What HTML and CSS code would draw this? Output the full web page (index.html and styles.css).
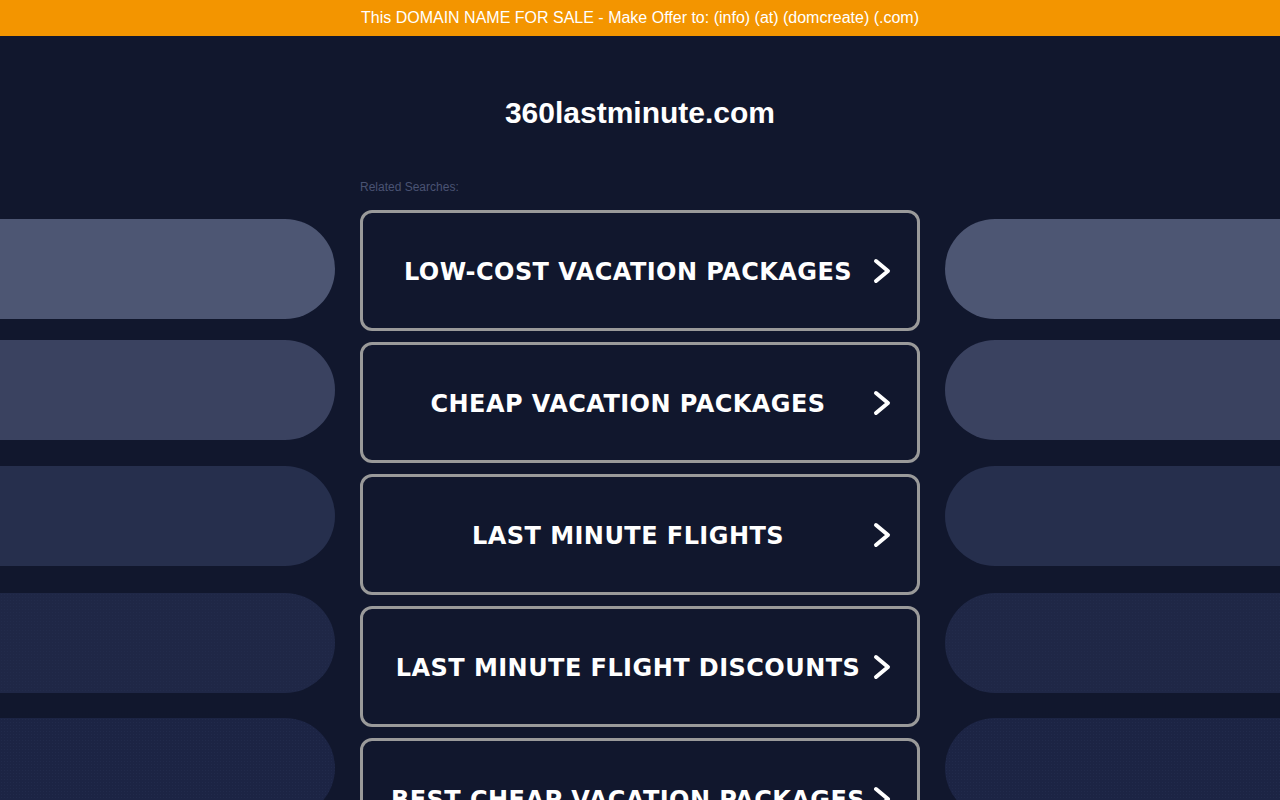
FILE: index.html
```html
<!DOCTYPE html>
<html lang="en">
<head>
<meta charset="utf-8">
<title>360lastminute.com</title>
<link rel="stylesheet" href="styles.css">
</head>
<body>
<div class="topbar">This DOMAIN NAME FOR SALE - Make Offer to: (info) (at) (domcreate) (.com)</div>
<div class="page">
  <div class="side side-left">
    <div class="pill p1"></div>
    <div class="pill p2"></div>
    <div class="pill p3"></div>
    <div class="pill p4"></div>
    <div class="pill p5"></div>
  </div>
  <div class="center">
    <h1 class="title">360lastminute.com</h1>
    <div class="related">Related Searches:</div>
    <div class="links">
      <a class="link" href="#"><span class="label">LOW-COST VACATION PACKAGES</span><svg class="chev" viewBox="0 0 18 26" width="18" height="26"><polyline points="3,3 15,13 3,23"/></svg></a>
      <a class="link" href="#"><span class="label">CHEAP VACATION PACKAGES</span><svg class="chev" viewBox="0 0 18 26" width="18" height="26"><polyline points="3,3 15,13 3,23"/></svg></a>
      <a class="link" href="#"><span class="label">LAST MINUTE FLIGHTS</span><svg class="chev" viewBox="0 0 18 26" width="18" height="26"><polyline points="3,3 15,13 3,23"/></svg></a>
      <a class="link" href="#"><span class="label">LAST MINUTE FLIGHT DISCOUNTS</span><svg class="chev" viewBox="0 0 18 26" width="18" height="26"><polyline points="3,3 15,13 3,23"/></svg></a>
      <a class="link" href="#"><span class="label">BEST CHEAP VACATION PACKAGES</span><svg class="chev" viewBox="0 0 18 26" width="18" height="26"><polyline points="3,3 15,13 3,23"/></svg></a>
    </div>
  </div>
  <div class="side side-right">
    <div class="pill p1"></div>
    <div class="pill p2"></div>
    <div class="pill p3"></div>
    <div class="pill p4"></div>
    <div class="pill p5"></div>
  </div>
</div>
</body>
</html>
```
FILE: styles.css
```css
html, body {
  margin: 0;
  padding: 0;
  height: 800px;
  overflow: hidden;
  background: #11172d;
  font-family: "Liberation Sans", Arial, sans-serif;
}
.topbar {
  height: 36px;
  line-height: 36px;
  background: #f39500;
  color: #ffffff;
  font-size: 16px;
  text-align: center;
}
.page {
  display: grid;
  grid-template-columns: 335px 560px 335px;
  column-gap: 25px;
}
.side {
  display: flex;
  flex-direction: column;
  padding-top: 183px;
}
.pill {
  height: 100px;
  flex: none;
}
.side-left .pill { border-radius: 0 50px 50px 0; }
.side-right .pill { border-radius: 50px 0 0 50px; }
.p1 { background: #4d5673; }
.p2 { background: #3a4260; margin-top: 21px; }
.p3 { background: #262f4d; margin-top: 26px; }
.p4 {
  background-color: #1f2746;
  background-image: radial-gradient(rgba(50,64,102,0.18) 0.5px, transparent 0.8px);
  background-size: 3px 3px;
  margin-top: 27px;
}
.p5 {
  background-color: #1c2444;
  background-image: radial-gradient(rgba(50,64,102,0.22) 0.5px, transparent 0.8px);
  background-size: 3px 3px;
  margin-top: 25px;
}
.center {
  display: flex;
  flex-direction: column;
}
.title {
  margin: 59px 0 0;
  font-size: 30px;
  line-height: 36px;
  font-weight: bold;
  color: #ffffff;
  text-align: center;
}
.related {
  margin-top: 49px;
  font-size: 12px;
  line-height: 14px;
  color: #4a5373;
}
.links {
  margin-top: 16px;
  display: flex;
  flex-direction: column;
  gap: 11px;
}
.link {
  box-sizing: border-box;
  height: 121px;
  border: 3px solid #9a9a9a;
  border-radius: 12px;
  display: flex;
  align-items: center;
  text-decoration: none;
  color: #ffffff;
}
.label {
  flex: 1;
  text-align: center;
  padding-left: 26px;
  padding-top: 3px;
  font-family: "DejaVu Sans", Verdana, sans-serif;
  font-weight: bold;
  font-size: 24px;
  letter-spacing: 0.45px;
  white-space: nowrap;
}
.chev {
  flex: none;
  margin: 0 26px 0 6px;
  fill: none;
  stroke: #ffffff;
  stroke-width: 4;
  stroke-linecap: round;
  stroke-linejoin: round;
}
```
